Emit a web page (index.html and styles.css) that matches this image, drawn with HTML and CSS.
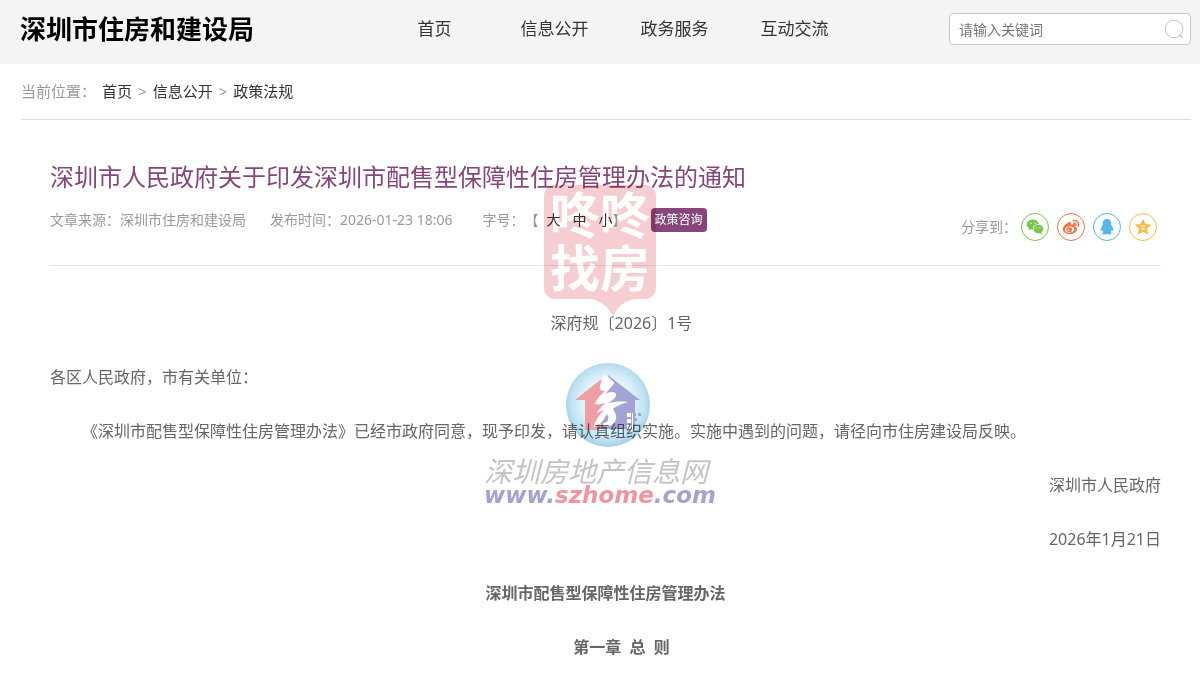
FILE: index.html
```html
<!DOCTYPE html>
<html lang="zh-CN">
<head>
    <meta charset="UTF-8">
    <meta name="viewport" content="width=device-width, initial-scale=1.0">
    <title>深圳市住房和建设局</title>
    <link rel="stylesheet" href="styles.css">
</head>
<body>
    <header class="header">
        <a class="logo" href="#">深圳市住房和建设局</a>
        <nav class="nav">
            <a href="#">首页</a>
            <a href="#">信息公开</a>
            <a href="#">政务服务</a>
            <a href="#">互动交流</a>
        </nav>
        <form class="search">
            <input type="text" placeholder="请输入关键词" aria-label="请输入关键词">
            <button type="button" aria-label="搜索">
                <svg width="20" height="20" viewBox="0 0 20 20" fill="none" stroke="#c4c4c4">
                    <circle cx="10" cy="10" r="8.8"/>
                    <path d="M15.5 15.5l3 3" stroke-width="1.5"/>
                </svg>
            </button>
        </form>
    </header>

    <div class="container">
        <div class="crumbs">
            <span>当前位置：</span>
            <a href="#">首页</a>
            <span>&gt;</span>
            <a href="#">信息公开</a>
            <span>&gt;</span>
            <a href="#">政策法规</a>
        </div>

        <main class="article">
            <h1>深圳市人民政府关于印发深圳市配售型保障性住房管理办法的通知</h1>
            <div class="info">
                <div class="meta">
                    <span>文章来源：深圳市住房和建设局</span>
                    <span class="date">发布时间：2026-01-23 18:06</span>
                    <div class="size">
                        <span>字号：</span>
                        <span>【</span>
                        <div class="size-buttons">
                            <button type="button">大</button>
                            <button type="button">中</button>
                            <button type="button">小</button>
                        </div>
                        <span>】</span>
                    </div>
                    <a class="consult" href="#">政策咨询</a>
                </div>
                <div class="share">
                    <span>分享到：</span>
                    <a class="wechat" href="#" aria-label="微信">
                        <svg width="18" height="18" viewBox="0 0 18 18">
                            <path fill="currentColor" d="M7 1.500C3.400 1.500.8 3.800.8 6.600c0 1.600.8 2.900 2.200 3.900L2.500 12.400l2.200-1.200c.7.2 1.400.3 2.300.3C6.500 8.600 9 6.100 13 6.100 12.400 3.400 9.900 1.500 7 1.500z"/>
                            <path fill="currentColor" d="M17.300 11.100c0-2.400-2.200-4.300-4.900-4.300s-4.900 1.900-4.900 4.300 2.200 4.300 4.900 4.300c.6 0 1.100-.1 1.600-.2l1.800 1-.4-1.600c1.200-.9 1.900-2.100 1.900-3.500z"/>
                            <g fill="#fff"><circle cx="5" cy="5.300" r=".7"/><circle cx="9" cy="5.300" r=".7"/><circle cx="10.800" cy="9.800" r=".6"/><circle cx="13.900" cy="9.800" r=".6"/></g>
                        </svg>
                    </a>
                    <a class="weibo" href="#" aria-label="微博">
                        <svg width="18" height="18" viewBox="0 0 18 18">
                            <path fill="currentColor" d="M7.500 4C5.300 4.500 1 8 .8 11c-.2 3.200 3.200 5 6.700 5 4.300 0 7.600-2.300 7.600-4.800 0-1.300-1-2.100-2.100-2.400.5-1.600.1-2.600-1.100-2.700-1 0-1.900.3-2.800.6.3-1.600.1-3.100-1.600-2.700z"/>
                            <ellipse cx="7.600" cy="11.500" rx="4.600" ry="3" fill="#fff" transform="rotate(-8 7.600 11.500)"/>
                            <ellipse cx="7.200" cy="11.700" rx="2.900" ry="2.400" fill="currentColor"/>
                            <circle cx="6.500" cy="12.100" r=".9" fill="#fff"/>
                            <path fill="none" stroke="currentColor" stroke-width="1.500" stroke-linecap="round" d="M11.400 2.500c3.600-.6 6 2.400 5 5.700M11.700 5c1.600-.2 2.700 1 2.200 2.500"/>
                        </svg>
                    </a>
                    <a class="qq" href="#" aria-label="QQ">
                        <svg width="18" height="18" viewBox="0 0 18 18">
                            <path fill="currentColor" d="M9 1C6.200 1 4.700 3 4.700 5.500v1.700C3.400 8.800 2.500 10.500 2.700 12.400c.1.900.7.700 1.600-.5.200.9.600 1.600 1.200 2.200-1 .4-1.200 1-1 1.600.4 1 3.500 1 4.500.1 1 .9 4.100.9 4.500-.1.200-.6 0-1.200-1-1.600.6-.6 1-1.300 1.200-2.200.9 1.200 1.500 1.400 1.600.5.200-1.900-.7-3.600-2-5.200V5.500C13.300 3 11.800 1 9 1z"/>
                        </svg>
                    </a>
                    <a class="qzone" href="#" aria-label="QQ空间">
                        <svg width="18" height="18" viewBox="0 0 18 18">
                            <path fill="currentColor" stroke="currentColor" stroke-linejoin="round" d="M9 1.800l2.200 4.700 5.100.6-3.800 3.500 1 5.100L9 13.200l-4.500 2.500 1-5.100-3.800-3.500 5.100-.6z"/>
                            <path fill="none" stroke="#fff" stroke-width=".9" d="M6.500 8c1.800-.3 3.200-.3 4.600-.1L7.500 11c1.600.3 2.900.3 4.100.1"/>
                        </svg>
                    </a>
                </div>
            </div>

            <div class="content">
                <p class="center indent">深府规〔2026〕1号</p>
                <p>各区人民政府，市有关单位：</p>
                <p class="indent">《深圳市配售型保障性住房管理办法》已经市政府同意，现予印发，请认真组织实施。实施中遇到的问题，请径向市住房建设局反映。</p>
                <p class="right">深圳市人民政府</p>
                <p class="right">2026年1月21日</p>
                <p class="center"><strong>深圳市配售型保障性住房管理办法</strong></p>
                <p class="center indent"><strong>第一章&nbsp; 总&nbsp; 则</strong></p>
            </div>
        </main>
    </div>

    <!-- 水印 -->
    <div class="watermark stamp">
        <svg width="114" height="132" viewBox="0 0 114 132">
            <path fill="#f6cdd0" d="M12 0h90a11 11 0 0 1 11 11v92a11 11 0 0 1-11 11h-9c-11 1-18 7-23 17-5-10-13-16-24-17H12a11 11 0 0 1-11-11V11A11 11 0 0 1 12 0z"/>
        </svg>
        <div class="stamp-text">咚咚<br>找房</div>
    </div>
    <div class="watermark szhome">
        <svg width="86" height="86" viewBox="0 0 86 86">
            <defs>
                <radialGradient id="ball" cx="50%" cy="48%" r="52%">
                    <stop offset="0" stop-color="#fff"/>
                    <stop offset=".55" stop-color="#e4f4fb"/>
                    <stop offset=".85" stop-color="#bfe2f3"/>
                    <stop offset="1" stop-color="#a2cfe8"/>
                </radialGradient>
            </defs>
            <circle cx="43" cy="43" r="42" fill="url(#ball)"/>
            <path fill="#ef9ea3" d="M35 18L10 38h10v30h14l14-30V20z"/>
            <path fill="#a4a4d4" d="M43 13l32 25h-5v29H36l8-30z"/>
            <path fill="#fff" d="M39 13c4 1 6 3 7 5 3 1 4 3 2 5l-8 9c4-2 9-3 11 0 1 3-3 6-8 9 6-1 12-2 20-1-7 2-12 4-15 7 3 5 5 9 1 14-4 5-12 4-16 0 5 1 9 0 10-3 1-2 0-4-1-6-3 6-8 11-14 14 2-7 6-13 11-18l-8 3 9-10c-4 1-7 2-10 1 2-6 6-9 10-13-4 0-6-2-5-5 1-4 2-7 4-11z"/>
            <g fill="#fff"><path d="M62 51h4v4h-4zM62 57h4v4h-4zM62 63h4v4h-4zM67 51h1v16h-1z"/></g>
            <path fill="#a4a4d4" d="M68 51h3v3h-3zM73 51h3v3h-3zM69 56h3v3h-3z"/>
        </svg>
        <div class="szhome-name">深圳房地产信息网</div>
        <div class="szhome-url">www.<span>szhome</span>.com</div>
    </div>
</body>
</html>
```
FILE: styles.css
```css
*{
    box-sizing: border-box;
    margin: 0;
    padding: 0;
}
body{
    position: relative;
    background: #fff;
    color: #666;
    font-family: "Noto Sans", "Noto Sans CJK SC", sans-serif;
    font-size: 14px;
}
a{
    color: #333;
    text-decoration: none;
}
button{
    border: 0;
    background: none;
    font: inherit;
    cursor: pointer;
}

/* 头部 */
.header{
    display: grid;
    grid-template-columns: 1fr auto 1fr;
    align-items: center;
    height: 64px;
    padding: 0 9px 6px 20px;
    background: #f4f4f4;
}
.logo{
    color: #000;
    font-size: 26px;
    font-weight: bold;
    line-height: 36px;
}
.nav{
    display: flex;
    padding-left: 18px;
}
.nav a{
    width: 120px;
    font-size: 17px;
    line-height: 24px;
    text-align: center;
}
.search{
    display: flex;
    align-items: center;
    justify-self: end;
    width: 242px;
    height: 32px;
    padding: 0 6px 0 9px;
    border: 1px solid #c8c8c8;
    border-radius: 4px;
    background: #fff;
}
.search input{
    flex: 1;
    min-width: 0;
    border: 0;
    outline: 0;
    background: none;
    font: inherit;
}
.search input::placeholder{
    color: #757575;
}
.search button{
    display: flex;
}

/* 当前位置 */
.container{
    padding: 0 9px 0 21px;
}
.crumbs{
    display: flex;
    gap: 6px;
    height: 56px;
    border-bottom: 1px solid #ddd;
    color: #999;
    font-size: 15px;
    line-height: 54px;
}

/* 文章 */
.article{
    padding: 40px 30px 0 29px;
}
.article h1{
    color: #85477b;
    font-size: 24px;
    font-weight: normal;
    line-height: 34px;
}
.info{
    display: flex;
    justify-content: space-between;
    height: 72px;
    padding-top: 12px;
    border-bottom: 1px solid #e6e6e6;
    color: #999;
}
.meta{
    display: flex;
    align-items: flex-start;
    gap: 24px;
    line-height: 28px;
}
.date{
    padding-right: 6px;
}
.size{
    display: flex;
}
.size-buttons{
    display: flex;
    gap: 12px;
    padding-left: 8px;
}
.size button{
    color: #333;
}
.consult{
    height: 24px;
    margin-top: 2px;
    padding: 0 4px;
    border-radius: 4px;
    background: #85477b;
    color: #fff;
    font-size: 12px;
    line-height: 24px;
}
.share{
    display: flex;
    gap: 8px;
    padding: 7px 4px 0 0;
    line-height: 28px;
}
.share span{
    margin-right: -4px;
}
.share a{
    display: flex;
    align-items: center;
    justify-content: center;
    width: 28px;
    height: 28px;
    border: 1px solid currentColor;
    border-radius: 50%;
}
.share .wechat{
    color: #7bc549;
}
.share .weibo{
    color: #ee7646;
}
.share .qq{
    color: #56b6e7;
}
.share .qzone{
    color: #fbb944;
}
.content{
    padding-top: 43px;
    font-size: 16px;
}
.content p{
    margin-bottom: 26px;
    line-height: 28px;
}
.content .indent{
    text-indent: 2em;
}
.content .center{
    text-align: center;
}
.content .right{
    text-align: right;
}

/* 水印 */
.watermark{
    position: absolute;
    pointer-events: none;
    mix-blend-mode: multiply;
}
.watermark svg{
    display: block;
}
.stamp{
    top: 185px;
    left: 543px;
}
.stamp-text{
    position: absolute;
    top: 4px;
    left: 7px;
    color: #fff;
    font-size: 50px;
    font-weight: bold;
    line-height: 53px;
    white-space: nowrap;
}
.szhome{
    top: 362px;
    left: 484px;
    white-space: nowrap;
}
.szhome svg{
    margin-left: 81px;
}
.szhome-name{
    margin-top: 7px;
    color: #c4c4c4;
    font-size: 28px;
    font-style: italic;
    line-height: 32px;
}
.szhome-url{
    color: #a3a3d2;
    font-family: "DejaVu Sans", sans-serif;
    font-size: 23px;
    font-style: italic;
    font-weight: bold;
    line-height: 16px;
}
.szhome-url span{
    color: #f0959f;
}
```
